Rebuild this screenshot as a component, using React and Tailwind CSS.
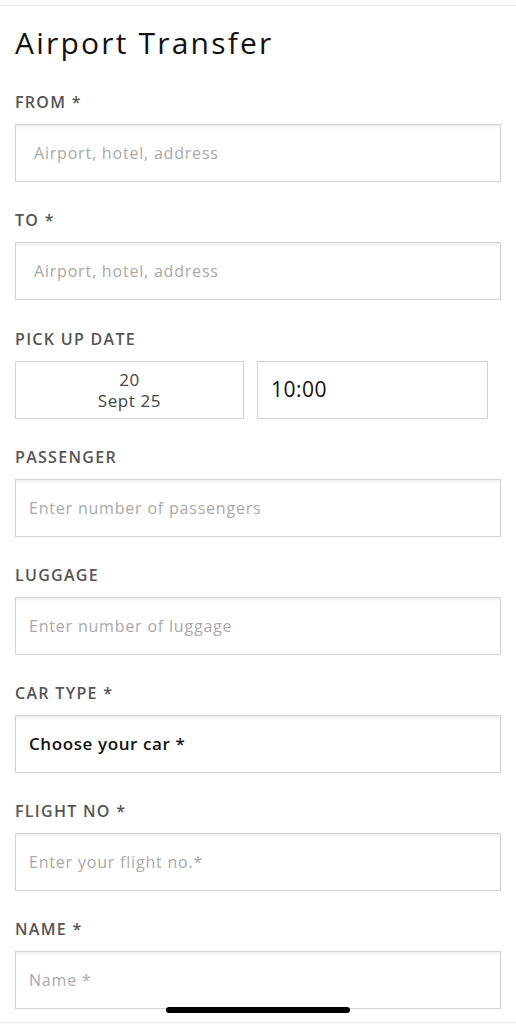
import React from 'react';

const font = { fontFamily: '"Open Sans", "Liberation Sans", sans-serif' };

const Label = ({ children }) => (
    <div className="h-[22px] flex items-center text-[16px] font-semibold text-[#555] tracking-[1.3px] uppercase">
        {children}
    </div>
);

const Field = ({ label, placeholder, pad = 'pl-[18px]', value }) => (
    <div className="flex flex-col">
        <Label>{label}</Label>
        <div className={`mt-[11px] h-[58px] border border-[#d2d2d2] bg-white shadow-[inset_0_4px_3px_-2px_#eeeeee] flex items-center ${pad}`}>
            {value ? (
                <span className="text-[17px] font-semibold text-[#111] tracking-[0.6px]">{value}</span>
            ) : (
                <span className="text-[16px] text-[#a9a9a9] tracking-[0.8px]">{placeholder}</span>
            )}
        </div>
    </div>
);

export default function App() {
    return (
        <div style={font} className="w-[516px] h-[1024px] bg-white relative overflow-hidden">
            <div className="h-[6px] border-b border-[#e6e6e6]"></div>
            <div className="px-[15px]">
                <h1 className="mt-[15px] text-[30px] leading-[44px] font-normal text-[#111] tracking-[2.2px]">Airport Transfer</h1>
                <div className="mt-[26px] flex flex-col gap-[27px] w-[486px]">
                    <Field label="FROM *" placeholder="Airport, hotel, address" />
                    <Field label="TO *" placeholder="Airport, hotel, address" />
                    <div className="flex flex-col pt-[1px]">
                        <Label>PICK UP DATE</Label>
                        <div className="mt-[11px] flex gap-[13px]">
                            <div className="w-[229px] h-[58px] border border-[#d2d2d2] flex flex-col items-center justify-center leading-[21px] text-[17px] text-[#444] tracking-[0.6px]">
                                <span>20</span>
                                <span>Sept 25</span>
                            </div>
                            <div className="w-[231px] h-[58px] border border-[#d2d2d2] flex items-center pl-[13px] text-[21px] text-[#111] tracking-[0.5px]">
                                10:00
                            </div>
                        </div>
                    </div>
                    <Field label="PASSENGER" placeholder="Enter number of passengers" pad="pl-[13px]" />
                    <Field label="LUGGAGE" placeholder="Enter number of luggage" pad="pl-[13px]" />
                    <Field label="CAR TYPE *" value="Choose your car *" pad="pl-[13px]" />
                    <Field label="FLIGHT NO *" placeholder="Enter your flight no.*" pad="pl-[13px]" />
                    <Field label="NAME *" placeholder="Name *" pad="pl-[13px]" />
                </div>
            </div>
            <div className="absolute left-[166px] top-[1007px] w-[184px] h-[6px] rounded-full bg-black"></div>
            <div className="absolute left-0 right-0 top-[1022px] border-t border-[#e6e6e6]"></div>
        </div>
    );
}
